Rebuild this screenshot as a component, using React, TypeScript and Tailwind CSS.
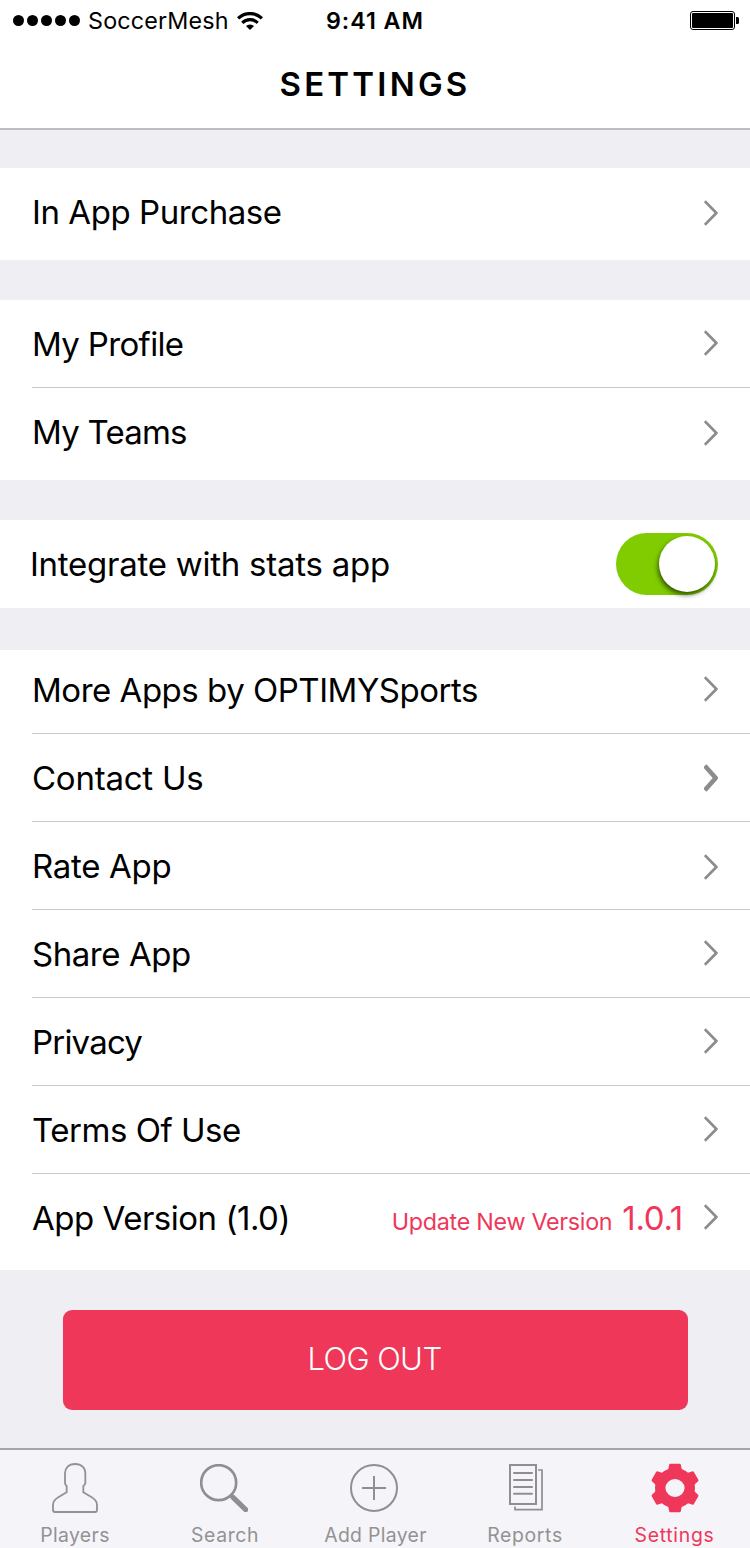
import React from "react";

type RowProps = {
  label: string;
  tracking: string;
  height?: string;
  divider?: boolean;
  chevron?: string;
  bold?: boolean;
  children?: React.ReactNode;
};

function Chevron({ bold = false, className = "" }: { bold?: boolean; className?: string }) {
  return bold ? (
    <svg viewBox="0 0 14 28" className={`h-7 w-3.5 shrink-0 ${className}`} fill="none" stroke="#8c8c8c" strokeWidth="4.6">
      <path d="M0.8 1.8 L11.7 14 L0.8 26.2" strokeLinejoin="round" />
    </svg>
  ) : (
    <svg viewBox="0 0 14 26" className={`h-[26px] w-3.5 shrink-0 ${className}`} fill="none" stroke="#8c8c8c" strokeWidth="2.7">
      <path d="M0.8 1.2 L12.4 13 L0.8 24.8" strokeLinejoin="round" />
    </svg>
  );
}

function Row({ label, tracking, height = "h-22", divider = false, chevron = "", bold = false, children }: RowProps) {
  return (
    <div className="pl-8">
      <div className={`flex items-center pr-8 ${height} ${divider ? "shadow-[inset_0_-1px_0_#c9c9cb]" : ""}`}>
        <span className={`flex-1 whitespace-nowrap text-[33px] leading-10 ${tracking}`}>{label}</span>
        {children}
        <Chevron bold={bold} className={chevron} />
      </div>
    </div>
  );
}

function Wifi() {
  return (
    <svg viewBox="0 0 26 18" className="ml-2 h-[18px] w-[26px] shrink-0" fill="none" stroke="#000" strokeWidth="3.2">
      <path d="M1.1 6.4 A17 17 0 0 1 24.9 6.4" />
      <path d="M5.3 10.8 A11 11 0 0 1 20.7 10.8" />
      <path d="M9 14 A5.8 5.8 0 0 1 17 14 L13 18 Z" fill="#000" stroke="none" />
    </svg>
  );
}

function StatusBar() {
  return (
    <div className="flex h-[41px] items-center pr-[11px] pl-[13px]">
      <div className="flex w-[313px] items-center">
        <div className="flex gap-[3px]">
          {[0, 1, 2, 3, 4].map((i) => (
            <span key={i} className="size-[11px] rounded-full bg-black" />
          ))}
        </div>
        <span className="ml-2 text-[23.3px] leading-7 tracking-[0.18px]">SoccerMesh</span>
        <Wifi />
      </div>
      <span className="flex-1 text-[23.3px] leading-7 font-[580] tracking-[0.95px]">9:41 AM</span>
      <svg viewBox="0 0 49 19" className="h-[19px] w-[49px]">
        <rect x="0.5" y="0.5" width="44" height="18" rx="2.5" fill="none" stroke="#000" />
        <rect x="2" y="2" width="41" height="15" rx="1" />
        <path d="M46 6 h1.5 q1.5 0 1.5 1.5 v4 q0 1.5 -1.5 1.5 h-1.5 z" />
      </svg>
    </div>
  );
}

function Tab({ label, icon, text }: { label: string; icon: React.ReactNode; text: string }) {
  return (
    <div className="flex flex-col items-center pt-3.5">
      <div className="flex h-12 items-center">{icon}</div>
      <span className={`mt-[11px] text-[19.4px] leading-6 whitespace-nowrap ${text}`}>{label}</span>
    </div>
  );
}

const playerIcon = (
  <svg viewBox="153 66 144 156" className="h-[52px] w-12 shrink-0" fill="none" stroke="#929292" strokeWidth="5.5">
    <path d="M225 72 C206 72 195 84 195 100 V129 Q196 135 200 138 V157 L176 171 Q159 181 159 194 V210 Q159 216 165 216 H285 Q291 216 291 210 V194 Q291 181 274 171 L250 157 V138 Q255 135 256 129 V100 C256 84 245 72 225 72 Z" />
  </svg>
);

const searchIcon = (
  <svg viewBox="600 72 144 144" className="mr-0.5 size-12" fill="none" stroke="#8f8e94">
    <circle cx="656" cy="128" r="52.5" strokeWidth="8" />
    <path d="M692 165 L704 177" strokeWidth="11" />
    <path d="M699 172 L737 209" strokeWidth="15.5" strokeLinecap="round" />
  </svg>
);

const addIcon = (
  <svg viewBox="0 0 48 48" className="mr-0.5 size-12" fill="none" stroke="#8f8e94" strokeWidth="2">
    <circle cx="24" cy="24" r="23" />
    <path d="M24 12 V36 M12 24 H36" />
  </svg>
);

const reportsIcon = (
  <svg viewBox="0 0 34 48" className="ml-0.5 h-12 w-[34px]" fill="none" stroke="#8f8e94" strokeWidth="2">
    <path d="M1 1 H27 V40 H1 Z" />
    <path d="M5 9 H23 M5 16 H23 M5 23 H23 M5 29.7 H23" strokeLinecap="round" />
    <path d="M29 6 H33 V45.7 H6 V42.5" strokeWidth="1.7" />
  </svg>
);

const gearIcon = (
  <svg viewBox="-24 -24 48 48" className="size-12 overflow-visible" fill="#ef3759">
    {[0, 60, 120, 180, 240, 300].map((a) => (
      <path key={a} transform={`rotate(${a})`} d="M-9.5 -15 Q-7.2 -17 -6.7 -19 L-5.9 -23 Q-5.6 -24.2 -4.6 -24.3 H4.6 Q5.6 -24.2 5.9 -23 L6.7 -19 Q7.2 -17 9.5 -15 Z" />
    ))}
    <path
      fillRule="evenodd"
      d="M0 -20 A20 20 0 0 1 0 20 A20 20 0 0 1 0 -20 Z M0 -9 A9.6 9 0 0 0 0 9 A9.6 9 0 0 0 0 -9 Z"
    />
  </svg>
);

export default function App() {
  return (
    <div className="flex h-[1548px] w-[750px] flex-col overflow-hidden bg-[#efeef3] font-['Inter',sans-serif] text-black">
      <header className="h-[130px] border-b-2 border-[#bdbcc4] bg-white">
        <StatusBar />
        <h1 className="mt-[23px] text-center text-[33px] leading-10 font-[590] tracking-[3.2px]">SETTINGS</h1>
      </header>

      <section className="mt-[38px] bg-white pb-1">
        <Row label="In App Purchase" tracking="tracking-[-0.43px]" chevron="mt-0.5" />
      </section>

      <section className="mt-10 bg-white pb-1">
        <Row label="My Profile" tracking="tracking-[-0.66px]" divider chevron="mb-0.5" />
        <Row label="My Teams" tracking="tracking-[-0.78px]" chevron="mt-0.5" />
      </section>

      <section className="mt-10 flex h-22 items-center justify-between bg-white pr-8 pl-[30px]">
        <span className="text-[33px] leading-10 tracking-[-0.25px]">Integrate with stats app</span>
        <button
          role="switch"
          aria-checked="true"
          className="flex h-[62px] w-[102px] items-center justify-end overflow-visible rounded-full bg-[#80cc00] pr-[3px]"
        >
          <span className="size-14 rounded-full bg-white shadow-[-1px_3px_5px_rgba(0,0,0,0.6)]" />
        </button>
      </section>

      <section className="mt-[42px] bg-white pb-2">
        <Row label="More Apps by OPTIMYSports" tracking="tracking-[-0.48px]" height="h-21 pb-1" divider chevron="mb-0.5" />
        <Row label="Contact Us" tracking="tracking-[-0.24px]" divider bold />
        <Row label="Rate App" tracking="tracking-[-0.31px]" divider chevron="mt-0.5" />
        <Row label="Share App" tracking="tracking-[-0.45px]" divider chevron="mb-0.5" />
        <Row label="Privacy" tracking="tracking-[-0.8px]" divider chevron="mb-0.5" />
        <Row label="Terms Of Use" tracking="tracking-[-0.48px]" divider chevron="mb-0.5" />
        <Row label="App Version (1.0)" tracking="tracking-[-0.48px]" chevron="mb-0.5">
          <span className="mt-1 mr-[21px] flex items-baseline gap-2.5 whitespace-nowrap text-[#ef3759]">
            <span className="text-[23.3px] leading-10 tracking-[-0.29px]">Update New Version</span>
            <span className="text-[33px] leading-10 tracking-[-0.3px]">1.0.1</span>
          </span>
        </Row>
      </section>

      <button className="mt-10 ml-[63px] flex h-[100px] w-[625px] items-center justify-center rounded-[9px] bg-[#ef3759] pr-0.5 pb-0.5 text-[31px] leading-10 font-[360] tracking-[-0.55px] text-white">
        LOG OUT
      </button>

      <nav className="mt-[38px] grid h-[100px] grid-cols-5 border-t-2 border-[#a5a4ab] bg-[#f5f4f9]">
        <Tab label="Players" icon={playerIcon} text="text-[#929292] tracking-[0.35px]" />
        <Tab label="Search" icon={searchIcon} text="text-[#929292] tracking-[0.6px]" />
        <Tab label="Add Player" icon={addIcon} text="text-[#929292] tracking-[0.32px] pl-px" />
        <Tab label="Reports" icon={reportsIcon} text="text-[#929292] tracking-[0.65px]" />
        <Tab label="Settings" icon={gearIcon} text="text-[#ef3759] tracking-[0.72px] pr-px" />
      </nav>
    </div>
  );
}
